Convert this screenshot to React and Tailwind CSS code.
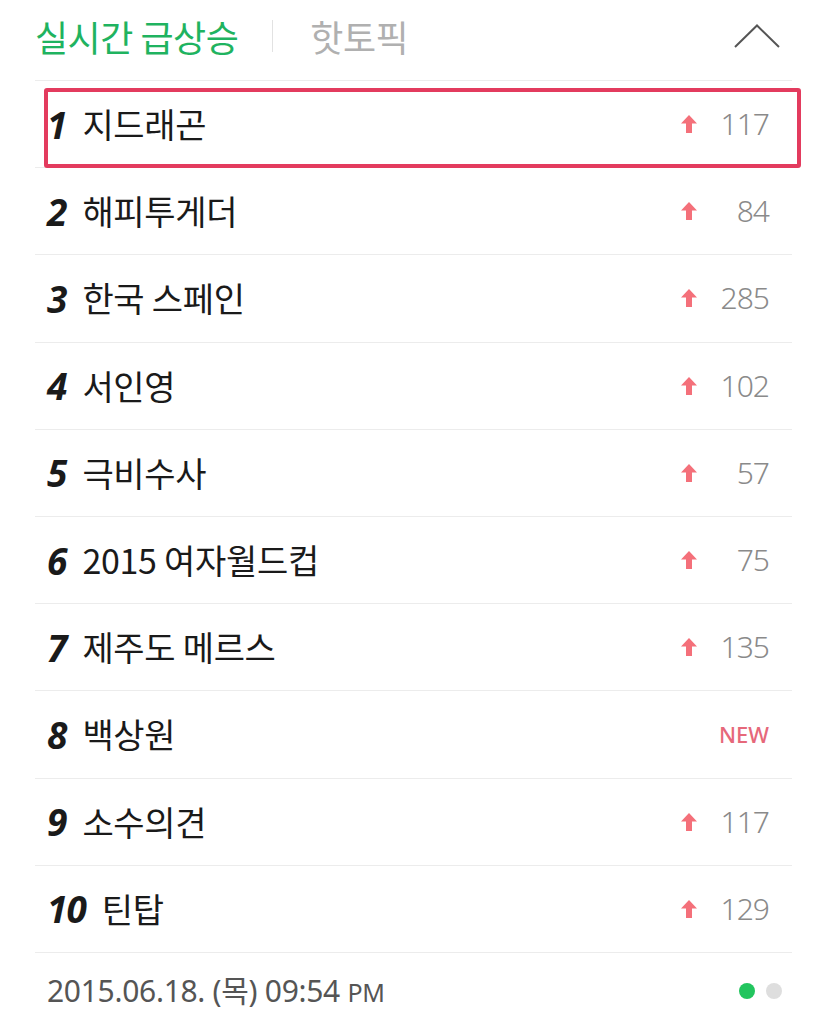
import React from "react";

const rows = [
  { n: "1", t: "지드래곤", v: "117" },
  { n: "2", t: "해피투게더", v: "84" },
  { n: "3", t: "한국 스페인", v: "285" },
  { n: "4", t: "서인영", v: "102" },
  { n: "5", t: "극비수사", v: "57" },
  { n: "6", t: "2015 여자월드컵", v: "75" },
  { n: "7", t: "제주도 메르스", v: "135" },
  { n: "8", t: "백상원", v: "NEW" },
  { n: "9", t: "소수의견", v: "117" },
  { n: "10", t: "틴탑", v: "129" },
];

const font = { fontFamily: '"Noto Sans CJK KR", "Noto Sans", sans-serif' };

function Arrow() {
  return (
    <svg width="16" height="18" viewBox="0 0 16 18" className="mr-[8px]">
      <path d="M8 0 L16 8.5 L11 8.5 L11 18 L5 18 L5 8.5 L0 8.5 Z" fill="#f4707a" />
    </svg>
  );
}

export default function App() {
  return (
    <div className="relative w-[827px] h-[1024px] bg-white overflow-hidden" style={font}>
      <div className="mx-[35px]">
        <div className="h-[81px] flex items-center border-b border-[#ececec] pb-[8px]">
          <span className="text-[36px] text-[#1fb360] leading-none tracking-[-0.5px]">실시간 급상승</span>
          <span className="ml-[34px] mr-[37px] w-px h-[32px] bg-[#e2e2e2]" />
          <span className="text-[36px] text-[#b0b0b0] leading-none tracking-[-0.5px]">핫토픽</span>
          <div className="ml-auto mr-[12px]">
            <svg width="46" height="24" viewBox="0 0 46 24">
              <path d="M1 23 L23 1.5 L45 23" fill="none" stroke="#555" strokeWidth="2" />
            </svg>
          </div>
        </div>
        {rows.map((r) => (
          <div key={r.n} className="h-[87.2px] flex items-center border-b border-[#ececec] pl-[12px] pr-[23px]">
            <span
              className="text-[37px] font-bold italic text-[#1a1a1a] leading-none tracking-[-1px]"
              style={{ fontFamily: '"Noto Sans", sans-serif' }}
            >
              {r.n}
            </span>
            <span className="ml-[16px] text-[34px] text-[#1a1a1a] leading-none tracking-[-0.3px]">{r.t}</span>
            <div className="ml-auto flex items-center">
              {r.v === "NEW" ? (
                <span className="text-[22px] font-medium text-[#e6687a] leading-none" style={{ fontFamily: '"Noto Sans", sans-serif' }}>NEW</span>
              ) : (
                <>
                  <Arrow />
                  <span
                    className="w-[64px] text-right text-[30px] font-light text-[#8a8a8a] leading-none tracking-[-1px]"
                    style={{ fontFamily: '"Noto Sans", sans-serif' }}
                  >
                    {r.v}
                  </span>
                </>
              )}
            </div>
          </div>
        ))}
        <div className="h-[70px] flex items-center pl-[12px] pr-[10px] pt-[6px]">
          <span className="text-[30px] text-[#555] leading-none tracking-[-0.3px]" style={{ fontFamily: '"Noto Sans", "Noto Sans CJK KR", sans-serif' }}>
            2015.06.18. (목) 09:54 <span className="text-[25px]">PM</span>
          </span>
          <div className="ml-auto flex items-center gap-[11px]">
            <span className="w-[16px] h-[16px] rounded-full bg-[#22c55e]" />
            <span className="w-[16px] h-[16px] rounded-full bg-[#dedede]" />
          </div>
        </div>
      </div>
      <div className="absolute left-[44px] top-[88px] w-[757px] h-[80px] border-[4px] border-[#e33b5e] rounded-[3px] pointer-events-none" />
    </div>
  );
}
